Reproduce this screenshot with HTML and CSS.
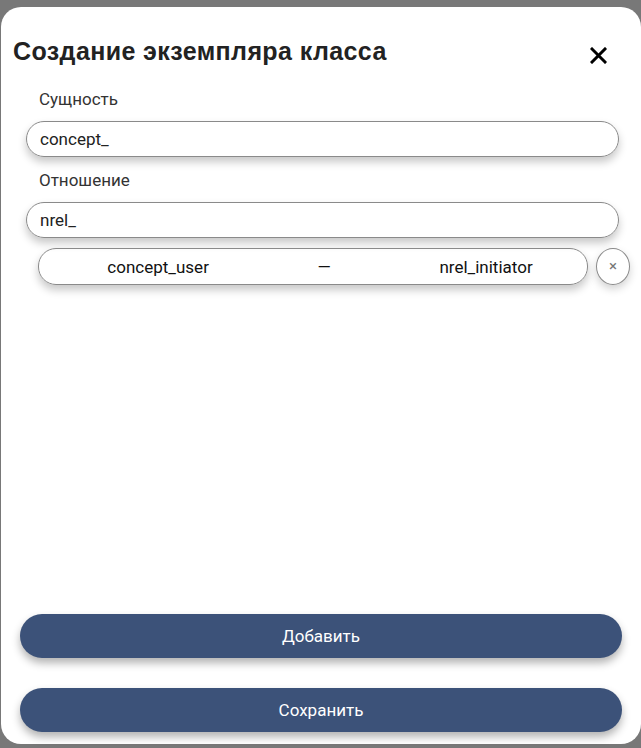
FILE: index.html
```html
<!DOCTYPE html>
<html lang="ru">
<head>
<meta charset="utf-8">
<title>Создание экземпляра класса</title>
<link rel="stylesheet" href="styles.css">
</head>
<body>
<div class="modal">
  <div class="header">
    <h1 class="title">Создание экземпляра класса</h1>
    <button class="close" aria-label="Закрыть">
      <svg width="17" height="17" viewBox="0 0 17 17"><path d="M2 2 L15 15 M15 2 L2 15" stroke="#000" stroke-width="3" stroke-linecap="square"/></svg>
    </button>
  </div>
  <div class="form">
    <div class="label">Сущность</div>
    <div class="input">concept_</div>
    <div class="label label-second">Отношение</div>
    <div class="input">nrel_</div>
    <div class="pair-row">
      <div class="pair">
        <span>concept_user</span>
        <span>—</span>
        <span>nrel_initiator</span>
      </div>
      <button class="remove" aria-label="Удалить">×</button>
    </div>
  </div>
  <div class="spacer"></div>
  <div class="actions">
    <button class="btn">Добавить</button>
    <button class="btn">Сохранить</button>
  </div>
</div>
</body>
</html>
```
FILE: styles.css
```css
html, body {
  margin: 0;
  padding: 0;
  background: #787878;
  height: 748px;
  overflow: hidden;
}

.modal {
  margin: 7px 0 0 1px;
  width: 640px;
  height: 737px;
  background: #fff;
  border-radius: 20px;
  box-sizing: border-box;
  display: flex;
  flex-direction: column;
  font-family: Roboto, "Noto Sans", sans-serif;
}

.header {
  display: flex;
  align-items: center;
  justify-content: space-between;
  padding: 30px 34px 0 12px;
}

.title {
  margin: 0;
  font-family: "Liberation Sans", Arial, sans-serif;
  font-weight: bold;
  font-size: 25px;
  letter-spacing: 0.4px;
  line-height: 28px;
  color: #222;
}

.close {
  border: 0;
  background: none;
  padding: 0;
  width: 17px;
  height: 17px;
  margin-top: 8px;
  display: flex;
}

.form {
  padding: 24px 22px 0 25px;
  display: flex;
  flex-direction: column;
}

.label {
  font-size: 17px;
  line-height: 20px;
  color: #333;
  padding-left: 13px;
  margin-bottom: 12px;
}

.label-second {
  margin-top: 13px;
}

.input {
  height: 36px;
  box-sizing: border-box;
  border: 1px solid #8a8a8a;
  border-radius: 18px;
  padding: 0 13px;
  display: flex;
  align-items: center;
  font-size: 17px;
  color: #222;
  box-shadow: 0 5px 9px rgba(0, 0, 0, 0.22);
}

.pair-row {
  margin-top: 10px;
  padding-left: 12px;
  display: flex;
  align-items: center;
  gap: 8px;
}

.pair {
  flex: none;
  width: 550px;
  height: 37px;
  box-sizing: border-box;
  border: 1px solid #8a8a8a;
  border-radius: 18px;
  padding-left: 14px;
  display: flex;
  align-items: center;
  justify-content: space-around;
  font-size: 17px;
  color: #111;
  box-shadow: 0 5px 9px rgba(0, 0, 0, 0.22);
}

.remove {
  flex: none;
  width: 34px;
  height: 37px;
  border: 1px solid #8a8a8a;
  border-radius: 50%;
  background: #fff;
  color: #777;
  font-family: Roboto, sans-serif;
  font-size: 15px;
  line-height: 1;
  padding: 0;
  box-shadow: 0 4px 8px rgba(0, 0, 0, 0.18);
}

.spacer {
  flex: 1;
}

.actions {
  padding: 0 19px 12px 19px;
  display: flex;
  flex-direction: column;
  gap: 30px;
}

.btn {
  height: 44px;
  border: 0;
  border-radius: 22px;
  background: #3c5279;
  color: #fff;
  font-family: Roboto, sans-serif;
  font-size: 17px;
  box-shadow: 0 5px 9px rgba(0, 0, 0, 0.3);
}
```
